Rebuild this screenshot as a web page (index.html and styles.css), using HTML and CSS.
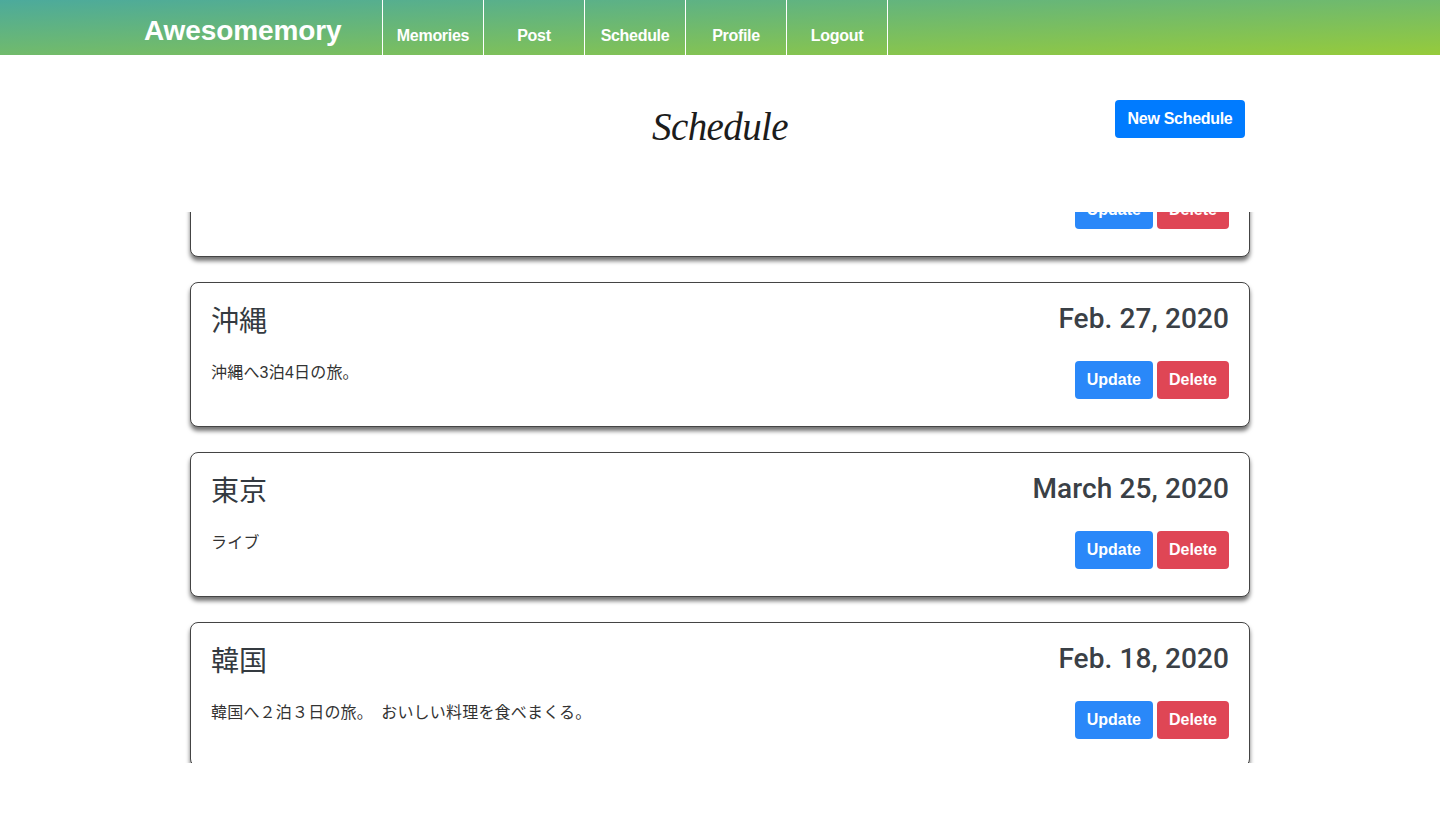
FILE: index.html
```html
<!DOCTYPE html>
<html lang="ja">
<head>
<meta charset="utf-8">
<title>Schedule</title>
<link rel="stylesheet" href="styles.css">
</head>
<body>
<header class="navbar">
  <a class="brand" href="#">Awesomemory</a>
  <nav class="nav">
    <a class="nav-item" href="#">Memories</a>
    <a class="nav-item" href="#">Post</a>
    <a class="nav-item" href="#">Schedule</a>
    <a class="nav-item" href="#">Profile</a>
    <a class="nav-item" href="#">Logout</a>
  </nav>
</header>

<section class="top">
  <div></div>
  <h1 class="page-title">Schedule</h1>
  <a class="btn btn-new" href="#">New Schedule</a>
</section>

<div class="list-window">
  <div class="list">
    <article class="card">
      <div class="card-head">
        <h3 class="card-title">大阪</h3>
        <span class="card-date">Jan. 10, 2020</span>
      </div>
      <div class="card-body">
        <p class="card-text">大阪旅行。</p>
        <div class="actions">
          <a class="btn btn-update" href="#">Update</a>
          <a class="btn btn-delete" href="#">Delete</a>
        </div>
      </div>
    </article>
    <article class="card">
      <div class="card-head">
        <h3 class="card-title">沖縄</h3>
        <span class="card-date">Feb. 27, 2020</span>
      </div>
      <div class="card-body">
        <p class="card-text">沖縄へ3泊4日の旅。</p>
        <div class="actions">
          <a class="btn btn-update" href="#">Update</a>
          <a class="btn btn-delete" href="#">Delete</a>
        </div>
      </div>
    </article>
    <article class="card">
      <div class="card-head">
        <h3 class="card-title">東京</h3>
        <span class="card-date">March 25, 2020</span>
      </div>
      <div class="card-body">
        <p class="card-text">ライブ</p>
        <div class="actions">
          <a class="btn btn-update" href="#">Update</a>
          <a class="btn btn-delete" href="#">Delete</a>
        </div>
      </div>
    </article>
    <article class="card">
      <div class="card-head">
        <h3 class="card-title">韓国</h3>
        <span class="card-date">Feb. 18, 2020</span>
      </div>
      <div class="card-body">
        <p class="card-text">韓国へ２泊３日の旅。　おいしい料理を食べまくる。</p>
        <div class="actions">
          <a class="btn btn-update" href="#">Update</a>
          <a class="btn btn-delete" href="#">Delete</a>
        </div>
      </div>
    </article>
  </div>
</div>
</body>
</html>
```

FILE: styles.css
```css
* { box-sizing: border-box; }

html, body {
  margin: 0;
  padding: 0;
  background: #fff;
  font-family: "Liberation Sans", Arial, "Noto Sans CJK JP", sans-serif;
  color: #212529;
}

a { text-decoration: none; }

.navbar {
  height: 55px;
  display: flex;
  align-items: stretch;
  padding-left: 144px;
  background: linear-gradient(to bottom right, #4caa9c, #96cb3b);
}

.brand {
  color: #fff;
  font-weight: 700;
  font-size: 28px;
  line-height: 55px;
  padding-top: 3px;
  width: 238px;
  letter-spacing: -0.1px;
}

.nav {
  display: flex;
  border-right: 1px solid #fff;
}

.nav-item {
  width: 101px;
  border-left: 1px solid #fff;
  color: #fff;
  font-weight: 700;
  font-size: 16px;
  text-align: center;
  padding-top: 27px;
  letter-spacing: -0.3px;
}

.top {
  display: grid;
  grid-template-columns: 1fr auto 1fr;
  align-items: start;
  width: 1050px;
  margin: 0 auto;
  padding-top: 45px;
  height: 157px;
}

.page-title {
  margin: 0;
  font-family: "Liberation Serif", serif;
  font-style: italic;
  font-weight: 400;
  font-size: 39px;
  line-height: 54px;
  color: #1c1c1c;
  letter-spacing: -0.6px;
}

.btn {
  display: inline-block;
  font-size: 16px;
  line-height: 24px;
  padding: 7px 12px;
  border-radius: 4px;
  color: #fff;
  font-weight: 700;
  letter-spacing: 0;
}

.btn-new {
  justify-self: end;
  background: #007bff;
  width: 130px;
  text-align: center;
  padding-left: 0;
  padding-right: 0;
  letter-spacing: -0.3px;
}

.list-window {
  width: 1070px;
  margin: 0 auto;
  height: 551px;
  overflow: hidden;
  padding: 0 5px;
}

.list {
  display: flex;
  flex-direction: column;
  gap: 25px;
  margin-top: -100px;
}

.card {
  height: 145px;
  border: 1px solid #444;
  border-radius: 8px;
  box-shadow: 0 4px 4px rgba(0, 0, 0, 0.55);
  padding: 19px 20px 28px;
  background: #fff;
}

.card-head {
  display: flex;
  justify-content: space-between;
  align-items: center;
  height: 34px;
}

.card-title {
  margin: 0;
  font-family: "Noto Sans CJK JP", sans-serif;
  font-weight: 400;
  font-size: 28px;
  line-height: 34px;
  color: #343a40;
}

.card-date {
  font-family: Roboto, "Liberation Sans", sans-serif;
  font-size: 28px;
  line-height: 34px;
  font-weight: 500;
  color: #3a4046;
  letter-spacing: 0.1px;
}

.card-body {
  display: flex;
  justify-content: space-between;
  align-items: flex-start;
  margin-top: 25px;
}

.card-text {
  margin: 0;
  font-family: "Liberation Sans", "Noto Sans CJK JP", sans-serif;
  font-size: 16px;
  line-height: 24px;
  color: #333;
  letter-spacing: 0.2px;
}

.actions {
  display: flex;
  gap: 4px;
}

.btn-update { background: #2a88f9; }
.btn-delete { background: #df4655; }
```
